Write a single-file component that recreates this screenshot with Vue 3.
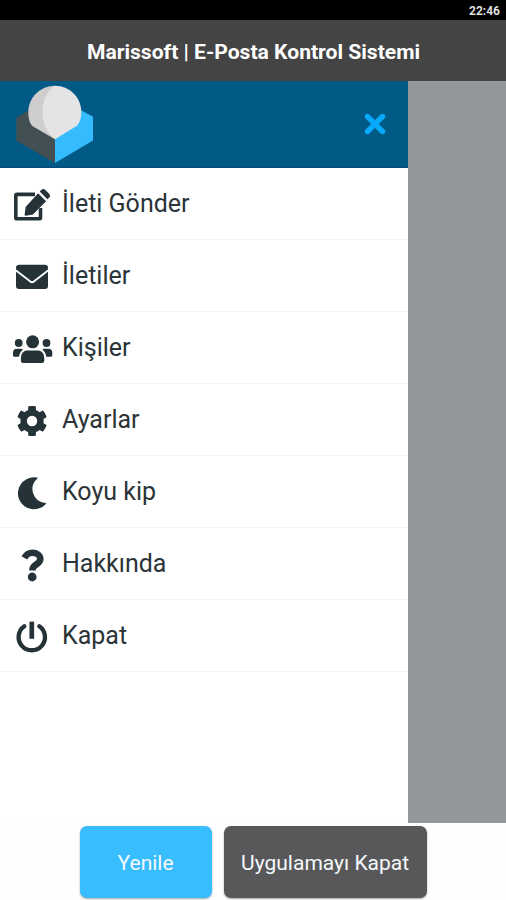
<script setup>
const items = [
  { icon: 'edit', label: 'İleti Gönder' },
  { icon: 'mail', label: 'İletiler' },
  { icon: 'users', label: 'Kişiler' },
  { icon: 'cog', label: 'Ayarlar' },
  { icon: 'moon', label: 'Koyu kip' },
  { icon: 'help', label: 'Hakkında' },
  { icon: 'power', label: 'Kapat' },
]
</script>

<template>
  <div class="screen">
    <div class="status"><span class="clock">22:46</span></div>
    <header class="title-bar"><h1 class="title">Marissoft | E-Posta Kontrol Sistemi</h1></header>
    <main class="content">
      <aside class="drawer">
        <div class="drawer-head">
          <svg class="logo" viewBox="0 0 80 80">
            <path fill="#425054" d="M1.3 34.5 20 24 40 56v24L1.300 57.800z" />
            <path fill="#35bcff" d="M78 33.800 62 25 40 56v24l38-22.500z" />
            <path fill="#cfcdce" d="M40 2.700C25.400 2.700 13.300 14.500 13.300 29c0 4.800.8 10.500 4 14L40 56.200z" />
            <path fill="#e4e4e5" d="M40 2.700c14.600 0 26.300 11.800 26.300 26.300 0 4.800-.8 9.500-4.300 13.800L40 56.200C31.500 50 27.500 39.500 27.500 29S31.500 8.500 40 2.700z" />
          </svg>
          <svg class="close" viewBox="0 0 24 24">
            <path d="M4.500 4.500 19.500 19.500M19.500 4.500 4.500 19.500" fill="none" stroke="#08a9fb" stroke-width="5.400" stroke-linecap="round" />
          </svg>
        </div>
        <nav class="menu">
          <a v-for="item in items" :key="item.icon" class="item">
            <svg class="icon" viewBox="0 0 62 72">
              <g v-if="item.icon === 'edit'">
                <path d="M35 26.400H17.200a1.400 1.400 0 0 0-1.400 1.400v21.600a1.400 1.400 0 0 0 1.400 1.400h21.900a1.400 1.400 0 0 0 1.400-1.400V40" fill="none" stroke="currentColor" stroke-width="3.600" />
                <path d="m38.100 25.200 8 8L32.900 46.400l-7 1.300q-1.400.2-1.200-1.200l.9-7.400z" stroke="#fff" stroke-width="1" paint-order="stroke" />
                <path d="m39.700 23.600 2-2q1.600-1.400 3.200 0l4.500 4.500q1.400 1.700 0 3.200l-2 2z" />
              </g>
              <g v-else-if="item.icon === 'mail'">
                <rect x="16" y="24.800" width="32" height="24.200" rx="3" />
                <path d="M15 29.800 30.400 41.600q1.700 1.200 3.400 0L49 29.800" fill="none" stroke="#fff" stroke-width="1.900" />
              </g>
              <g v-else-if="item.icon === 'users'">
                <circle cx="32.600" cy="29.800" r="6.500" />
                <circle cx="18.700" cy="31" r="3.900" />
                <circle cx="46.500" cy="31" r="3.900" />
                <path d="M26.800 38.500h11.600c3.800 0 5.900 3.700 5.900 8v2.300q0 2.200-2.300 2.200H23.200q-2.300 0-2.300-2.200v-2.300c0-4.300 2.100-8 5.900-8z" />
                <path d="M17 36.800h4q1.100 0 2 .8c-2.200 1.700-3.500 4.100-4 7.100h-4.500q-1.500 0-1.500-1.500v-2.400q0-4 4-4zM48.300 36.800h-4q-1.100 0-2 .8c2.200 1.700 3.500 4.100 4 7.100h4.500q1.500 0 1.500-1.500v-2.400q0-4-4-4z" />
              </g>
              <path v-else-if="item.icon === 'cog'" transform="translate(16.500 21.500) scale(.0607)" d="M487.400 315.700l-42.600-24.600c4.300-23.200 4.300-47 0-70.200l42.600-24.600c4.900-2.800 7.100-8.600 5.500-14-11.100-35.600-30-67.800-54.700-94.600-3.800-4.100-10-5.100-14.800-2.300L380.800 110c-17.900-15.400-38.500-27.300-60.800-35.100V25.800c0-5.600-3.900-10.500-9.400-11.700-36.700-8.200-74.300-7.800-109.200 0-5.500 1.200-9.400 6.100-9.400 11.700V75c-22.200 7.900-42.800 19.800-60.800 35.100L88.700 85.500c-4.900-2.800-11-1.900-14.800 2.300-24.700 26.700-43.600 58.900-54.700 94.600-1.700 5.400.6 11.200 5.500 14L67.300 221c-4.300 23.200-4.300 47 0 70.200l-42.600 24.600c-4.900 2.800-7.100 8.600-5.500 14 11.100 35.600 30 67.800 54.700 94.600 3.800 4.100 10 5.100 14.800 2.300l42.600-24.600c17.900 15.400 38.500 27.300 60.800 35.100v49.200c0 5.600 3.900 10.500 9.400 11.700 36.700 8.200 74.300 7.800 109.200 0 5.500-1.200 9.400-6.100 9.400-11.700v-49.200c22.200-7.900 42.800-19.800 60.800-35.100l42.600 24.600c4.900 2.800 11 1.900 14.800-2.300 24.700-26.700 43.600-58.900 54.700-94.600 1.500-5.500-.7-11.300-5.600-14.100zM256 342a86 86 0 1 1 0-172 86 86 0 0 1 0 172z" />
              <path v-else-if="item.icon === 'moon'" d="M34.200 21.300q1.800 0 3 .3c.7.200.6.800 0 1.200A13.800 13.800 0 0 0 45.200 46.900c.9-.1 1.300.4.700 1A16 16 0 1 1 34.200 21.300z" />
              <g v-else-if="item.icon === 'help'">
                <path d="M24.300 29.800c2-3.400 4.700-5.100 8-5.100 4.500 0 8 2.700 8 6.200 0 5.600-7.800 5.700-7.800 10.700v.8" fill="none" stroke="currentColor" stroke-width="6.600" />
                <circle cx="32.200" cy="49" r="4.400" />
              </g>
              <g v-else fill="none" stroke="currentColor" stroke-width="4.300" stroke-linecap="round">
                <path d="M24.300 26.200a13.200 13.200 0 1 0 15 0" />
                <path d="M31.800 21.600v17.200" stroke-width="4.700" stroke-linecap="butt" />
              </g>
            </svg>
            <span class="label">{{ item.label }}</span>
          </a>
        </nav>
      </aside>
      <div class="scrim"></div>
    </main>
    <footer class="actions">
      <button class="btn refresh">Yenile</button>
      <button class="btn quit">Uygulamayı Kapat</button>
    </footer>
  </div>
</template>

<style>
body { margin: 0; background: #fefefe; }
</style>

<style scoped>
.screen { height: 900px; overflow: hidden; display: flex; flex-direction: column; font-family: Roboto, sans-serif; background: #fefefe; }
.status { height: 20px; flex: none; background: #000; display: flex; justify-content: flex-end; align-items: center; padding: 2px 6px 0 0; box-sizing: border-box; }
.clock { color: #dedede; font-size: 12px; line-height: 18px; font-weight: 700; }
.title-bar { height: 61px; flex: none; background: #444; display: flex; align-items: center; justify-content: center; box-sizing: border-box; padding: 2px 0 0 1px; }
.title { margin: 0; color: #fff; font-size: 21.100px; line-height: 28px; font-weight: 700; white-space: nowrap; }
.content { height: 742px; flex: none; display: flex; }
.drawer { width: 408.400px; flex: none; background: #fff; }
.drawer-head { height: 87px; box-sizing: border-box; padding: 0 21.100px 0 15px; background: #005a85; border-bottom: 1px solid #074a7c; display: flex; align-items: center; justify-content: space-between; }
.logo { width: 80px; height: 80px; margin-top: -2px; }
.close { width: 24px; height: 24px; }
.item { display: flex; height: 72px; box-sizing: border-box; border-bottom: 1px solid #f5f6f6; color: #253238; }
.icon { width: 62px; height: 72px; flex: none; fill: currentColor; }
.label { font-size: 25px; line-height: 72px; color: #2b3438; white-space: nowrap; }
.scrim { flex: 1; background: #93979b; }
.actions { display: flex; gap: 12px; padding: 3px 0 0 79.600px; }
.btn { height: 72px; box-sizing: border-box; border: 0; border-radius: 7px; padding: 2px 0 0; color: #f5f8fa; font-family: inherit; font-size: 21px; text-align: center; box-shadow: 0 1px 2px rgba(0, 0, 0, .35); white-space: nowrap; }
.refresh { width: 132px; background: #38bdff; }
.quit { width: 203px; background: #58585a; }
</style>
